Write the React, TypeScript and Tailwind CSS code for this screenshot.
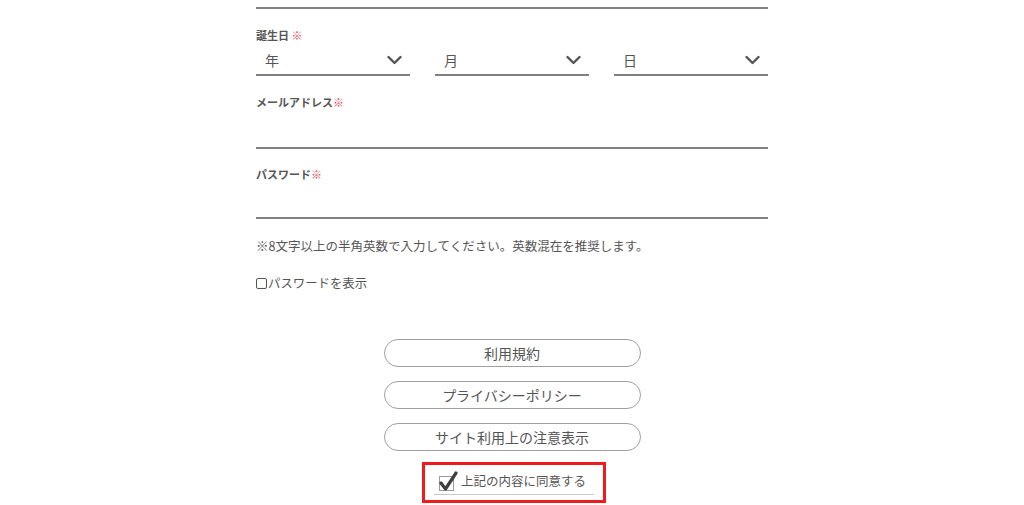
import React from "react";

const font = { fontFamily: '"Noto Sans CJK JP", "Noto Sans", sans-serif' };

function Chevron() {
  return (
    <svg width="15" height="10" viewBox="0 0 15 10" className="block">
      <path d="M1.5 2 L7.5 8 L13.5 2" fill="none" stroke="#555" strokeWidth="2.4" strokeLinecap="round" strokeLinejoin="round" />
    </svg>
  );
}

function Select({ label }: { label: string }) {
  return (
    <div className="flex h-[30px] w-[154px] items-center justify-between border-b-2 border-[#808080] pl-[9px] pr-[8px]">
      <span className="text-[14px] text-[#555]">{label}</span>
      <Chevron />
    </div>
  );
}

function Label({ text, space }: { text: string; space?: boolean }) {
  return (
    <div className="text-[11px] font-bold leading-[16px] text-[#555]">
      {text}
      {space ? " " : ""}
      <span className="font-normal text-[#e0454f]">※</span>
    </div>
  );
}

function PillButton({ text }: { text: string }) {
  return (
    <div className="flex h-[28px] w-[257px] items-center justify-center rounded-full border border-[#a0a0a0] text-[14px] text-[#555]">
      {text}
    </div>
  );
}

export default function App() {
  return (
    <div className="min-h-[505px] w-full bg-white" style={font}>
      <div className="mx-auto w-[512px]">
        <div className="pt-[7px]">
          <div className="h-[2px] bg-[#808080]" />
        </div>

        <div className="mt-[18px]">
          <Label text="誕生日" space />
        </div>
        <div className="mt-[3px] flex justify-between">
          <Select label="年" />
          <Select label="月" />
          <Select label="日" />
        </div>

        <div className="mt-[18px]">
          <Label text="メールアドレス" />
        </div>
        <div className="h-[39px] border-b-2 border-[#808080]" />

        <div className="mt-[17px]">
          <Label text="パスワード" />
        </div>
        <div className="h-[37px] border-b-2 border-[#808080]" />

        <div className="mt-[18px] text-[12.5px] leading-[18px] text-[#555]">
          ※8文字以上の半角英数で入力してください。英数混在を推奨します。
        </div>

        <div className="mt-[19px] flex items-center text-[12.4px] leading-[18px] text-[#555]">
          <span className="mr-[1px] inline-block h-[11px] w-[11px] rounded-[2px] border border-[#555]" />
          パスワードを表示
        </div>

        <div className="mt-[47px] flex flex-col items-center gap-[14px]">
          <PillButton text="利用規約" />
          <PillButton text="プライバシーポリシー" />
          <PillButton text="サイト利用上の注意表示" />
        </div>

        <div className="mt-[11px] flex justify-center pl-[4px]">
          <div className="flex h-[41px] w-[184px] items-start justify-center border-[3px] border-[#ee1c1c] pt-[5px]">
            <div className="flex w-[160px] items-center border-b border-[#c8c8c8] pb-[2px] pl-[4px]">
              <div className="relative mr-[3px] h-[22px] w-[20px]">
                <div className="absolute bottom-[1px] left-[1px] h-[15px] w-[15px] border border-[#9a9a9a] bg-white" />
                <svg className="absolute inset-0" width="20" height="22" viewBox="0 0 20 22">
                  <path d="M3 13 L7.5 19 L18 3" fill="none" stroke="#3f3f3f" strokeWidth="3.2" strokeLinecap="round" strokeLinejoin="round" />
                </svg>
              </div>
              <span className="text-[12.5px] leading-[20px] text-[#555]">上記の内容に同意する</span>
            </div>
          </div>
        </div>
      </div>
    </div>
  );
}
